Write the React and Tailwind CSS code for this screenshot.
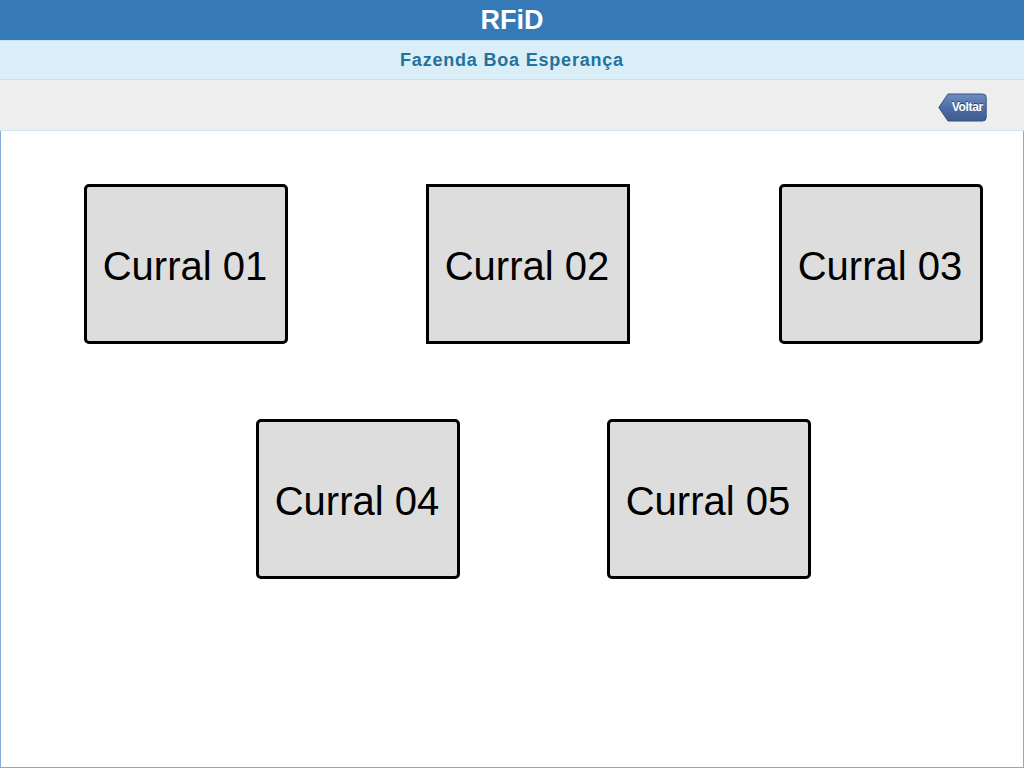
import React from "react";

function Box({ label, rounded = true, className = "" }) {
  return (
    <div
      className={`w-[204px] h-[160px] border-[3px] border-black bg-[#dddddd] flex items-center justify-center shrink-0 ${rounded ? "rounded-[5px]" : ""} ${className}`}
    >
      <span className="text-[40px] leading-none text-black pt-[3px] pr-[2px]">{label}</span>
    </div>
  );
}

function VoltarButton() {
  return (
    <div className="relative w-[49px] h-[29px]">
      <svg className="absolute inset-0" width="49" height="29" viewBox="0 0 49 29">
        <defs>
          <linearGradient id="vg" x1="0" y1="0" x2="0" y2="1">
            <stop offset="0" stopColor="#6f8fc0" />
            <stop offset="0.5" stopColor="#4d6ea5" />
            <stop offset="1" stopColor="#3e5c92" />
          </linearGradient>
        </defs>
        <path
          d="M0.8 14.5 L10 1 H44.5 Q48.2 1 48.2 4.5 V24.5 Q48.2 28 44.5 28 H10 Z"
          fill="url(#vg)"
          stroke="#34507f"
          strokeWidth="1"
        />
      </svg>
      <span className="absolute inset-0 flex items-center justify-end pr-[4px] text-[12px] font-bold text-white tracking-[-0.3px] [text-shadow:0_-1px_0_#2a4068]">
        Voltar
      </span>
    </div>
  );
}

export default function App() {
  return (
    <div
      className="w-[1024px] h-[768px] flex flex-col bg-white overflow-hidden"
      style={{ fontFamily: '"Liberation Sans", Arial, Helvetica, sans-serif' }}
    >
      <div className="h-[40px] bg-[#357ab7] flex items-center justify-center shrink-0">
        <span className="text-[27px] font-bold text-white leading-none">RFiD</span>
      </div>
      <div className="h-[40px] bg-[#d9eef7] border-t border-b border-[#c3e3f0] flex items-center justify-center shrink-0">
        <span className="text-[18px] font-bold text-[#23729e] leading-none tracking-[0.8px]">Fazenda Boa Esperança</span>
      </div>
      <div className="h-[51px] bg-[#eeeeee] border-b border-[#c9e6f1] flex items-center justify-end pr-[37px] pt-[4px] shrink-0">
        <VoltarButton />
      </div>
      <div className="flex-1 border-l border-r border-b border-[#86acd6] flex flex-col">
        <div className="flex pl-[83px] mt-[53px]">
          <Box label="Curral 01" />
          <Box label="Curral 02" rounded={false} className="ml-[138px]" />
          <Box label="Curral 03" className="ml-[149px]" />
        </div>
        <div className="flex pl-[255px] mt-[75px]">
          <Box label="Curral 04" />
          <Box label="Curral 05" className="ml-[147px]" />
        </div>
      </div>
    </div>
  );
}
